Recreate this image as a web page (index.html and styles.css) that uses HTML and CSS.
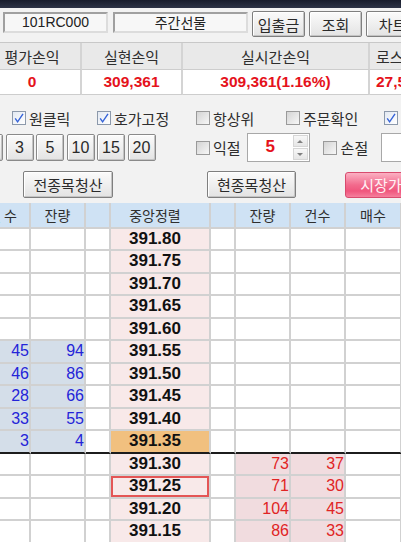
FILE: index.html
```html
<!DOCTYPE html>
<html lang="ko">
<head>
<meta charset="utf-8">
<title>주간선물 주문</title>
<link rel="stylesheet" href="styles.css">
</head>
<body>
<div class="app">
  <div class="titlebar"></div>

  <div class="toolbar">
    <div class="field code">101RC000</div>
    <div class="field name">주간선물</div>
    <button class="btn tb">입출금</button>
    <button class="btn tb">조회</button>
    <button class="btn tb">차트</button>
  </div>

  <div class="pnl">
    <div class="pc hd">평가손익</div>
    <div class="pc hd">실현손익</div>
    <div class="pc hd">실시간손익</div>
    <div class="pc hd left">로스컷</div>
    <div class="pc val">0</div>
    <div class="pc val">309,361</div>
    <div class="pc val">309,361(1.16%)</div>
    <div class="pc val left">27,512</div>
  </div>

  <div class="opt-row r1">
    <label class="chk w1"><span class="box on"><svg viewBox="0 0 12 12" width="12" height="12"><path d="M2.2 6.4 L4.6 9.8 L10 1.8" fill="none" stroke="#3563d8" stroke-width="1.4"/></svg></span><span>원클릭</span></label>
    <label class="chk w2"><span class="box on"><svg viewBox="0 0 12 12" width="12" height="12"><path d="M2.2 6.4 L4.6 9.8 L10 1.8" fill="none" stroke="#3563d8" stroke-width="1.4"/></svg></span><span>호가고정</span></label>
    <label class="chk w3"><span class="box"></span><span>항상위</span></label>
    <label class="chk w4"><span class="box"></span><span>주문확인</span></label>
    <label class="chk"><span class="box on"><svg viewBox="0 0 12 12" width="12" height="12"><path d="M2.2 6.4 L4.6 9.8 L10 1.8" fill="none" stroke="#3563d8" stroke-width="1.4"/></svg></span><span>자동</span></label>
  </div>

  <div class="opt-row r2">
    <button class="btn nb first">1</button>
    <button class="btn nb">3</button>
    <button class="btn nb">5</button>
    <button class="btn nb">10</button>
    <button class="btn nb">15</button>
    <button class="btn nb">20</button>
    <label class="chk ik"><span class="box"></span><span>익절</span></label>
    <div class="spin">
      <span class="spin-val">5</span>
      <span class="spin-btns"><span class="sb up"></span><span class="sb dn"></span></span>
    </div>
    <label class="chk sj"><span class="box"></span><span>손절</span></label>
    <div class="input-box"></div>
  </div>

  <div class="opt-row r3">
    <button class="btn big b-all">전종목청산</button>
    <button class="btn big b-cur">현종목청산</button>
    <button class="mkt">시장가</button>
  </div>

  <div class="book">
    <div class="bk h edge">건수</div><div class="bk h">잔량</div><div class="bk h"></div><div class="bk h pr">중앙정렬</div><div class="bk h"></div><div class="bk h">잔량</div><div class="bk h">건수</div><div class="bk h">매수</div>

    <div class="bk"></div><div class="bk"></div><div class="bk"></div><div class="bk p">391.80</div><div class="bk"></div><div class="bk"></div><div class="bk"></div><div class="bk"></div>
    <div class="bk"></div><div class="bk"></div><div class="bk"></div><div class="bk p">391.75</div><div class="bk"></div><div class="bk"></div><div class="bk"></div><div class="bk"></div>
    <div class="bk"></div><div class="bk"></div><div class="bk"></div><div class="bk p">391.70</div><div class="bk"></div><div class="bk"></div><div class="bk"></div><div class="bk"></div>
    <div class="bk"></div><div class="bk"></div><div class="bk"></div><div class="bk p">391.65</div><div class="bk"></div><div class="bk"></div><div class="bk"></div><div class="bk"></div>
    <div class="bk"></div><div class="bk"></div><div class="bk"></div><div class="bk p">391.60</div><div class="bk"></div><div class="bk"></div><div class="bk"></div><div class="bk"></div>

    <div class="bk s">45</div><div class="bk s">94</div><div class="bk"></div><div class="bk p">391.55</div><div class="bk"></div><div class="bk"></div><div class="bk"></div><div class="bk"></div>
    <div class="bk s">46</div><div class="bk s">86</div><div class="bk"></div><div class="bk p">391.50</div><div class="bk"></div><div class="bk"></div><div class="bk"></div><div class="bk"></div>
    <div class="bk s">28</div><div class="bk s">66</div><div class="bk"></div><div class="bk p">391.45</div><div class="bk"></div><div class="bk"></div><div class="bk"></div><div class="bk"></div>
    <div class="bk s">33</div><div class="bk s">55</div><div class="bk"></div><div class="bk p">391.40</div><div class="bk"></div><div class="bk"></div><div class="bk"></div><div class="bk"></div>
    <div class="bk s ln">3</div><div class="bk s ln">4</div><div class="bk ln"></div><div class="bk p cur ln">391.35</div><div class="bk ln"></div><div class="bk ln"></div><div class="bk ln"></div><div class="bk ln"></div>

    <div class="bk"></div><div class="bk"></div><div class="bk"></div><div class="bk p">391.30</div><div class="bk"></div><div class="bk b">73</div><div class="bk b">37</div><div class="bk"></div>
    <div class="bk"></div><div class="bk"></div><div class="bk"></div><div class="bk p sel">391.25</div><div class="bk"></div><div class="bk b">71</div><div class="bk b">30</div><div class="bk"></div>
    <div class="bk"></div><div class="bk"></div><div class="bk"></div><div class="bk p">391.20</div><div class="bk"></div><div class="bk b">104</div><div class="bk b">45</div><div class="bk"></div>
    <div class="bk"></div><div class="bk"></div><div class="bk"></div><div class="bk p">391.15</div><div class="bk"></div><div class="bk b">86</div><div class="bk b">33</div><div class="bk"></div>
  </div>
</div>
</body>
</html>
```

FILE: styles.css
```css
* { box-sizing: border-box; }

html, body {
  margin: 0;
  padding: 0;
}

body {
  width: 401px;
  height: 542px;
  overflow: hidden;
  background: #f2f2f2;
  font-family: "Noto Sans CJK KR", "DejaVu Sans", sans-serif;
  font-size: 15px;
  color: #2e2e2e;
}

.app {
  width: 401px;
  height: 542px;
  overflow: hidden;
  background: #f2f2f2;
}

.titlebar {
  height: 8px;
  background: linear-gradient(#181c2c, #2d3346);
}

/* ---------- toolbar ---------- */
.toolbar {
  display: flex;
  height: 34px;
  padding-top: 3px;
  padding-left: 3px;
}

.field {
  flex: none;
  height: 21px;
  margin-top: 1px;
  border: 2px solid;
  border-color: #a0a0a0 #dcdcdc #dcdcdc #a0a0a0;
  background: #f7f7f7;
  font-size: 14px;
  line-height: 17px;
  text-align: center;
  color: #222;
}

.field.code {
  width: 105px;
  font-family: "Liberation Sans", sans-serif;
}

.field.name {
  width: 135px;
  margin-left: 5px;
}

.btn {
  flex: none;
  padding: 0;
  font-family: "Noto Sans CJK KR", "DejaVu Sans", sans-serif;
  font-size: 15px;
  line-height: 1;
  color: #2a2a2a;
  background: linear-gradient(#fbfbfb, #e3e3e3);
  border: 1px solid #7f7f7f;
  border-radius: 2px;
  box-shadow: inset 1px 1px 0 #ffffff, inset -1px -1px 0 #c4c4c4;
  display: flex;
  align-items: center;
  justify-content: center;
}

.btn.tb {
  width: 53px;
  height: 26px;
  margin-left: 4px;
}

/* ---------- P&L strip ---------- */
.pnl {
  display: grid;
  grid-template-columns: 98px 101px 187px 100px;
  grid-template-rows: 27px 25px;
  width: 486px;
  margin-left: -16px;
  border-top: 1px solid #c8c8c8;
}

.pc {
  display: flex;
  align-items: center;
  justify-content: center;
  border-right: 2px solid #d4d4d4;
  border-bottom: 1px solid #cdcdcd;
  white-space: nowrap;
}

.pc.hd {
  background: #e9e9e9;
  font-size: 15px;
  color: #2e2e2e;
}

.pc.val {
  background: #ffffff;
  color: #e5121b;
  font-family: "Liberation Sans", sans-serif;
  font-weight: bold;
  font-size: 15.5px;
}

.pc.left {
  justify-content: flex-start;
  padding-left: 6px;
}

/* ---------- option rows ---------- */
.opt-row {
  display: flex;
  align-items: center;
  white-space: nowrap;
}

.r1 {
  height: 24px;
  margin-top: 11px;
  padding-left: 12px;
}

.r2 {
  height: 29px;
  margin-top: 3px;
}

.r3 {
  height: 27px;
  margin-top: 9px;
}

.chk {
  flex: none;
  display: flex;
  align-items: center;
  gap: 3px;
  font-size: 15px;
  color: #2e2e2e;
}

.chk.w1 { width: 85px; }
.chk.w2 { width: 99px; }
.chk.w3 { width: 90px; }
.chk.w4 { width: 98px; }

.box {
  flex: none;
  width: 14px;
  height: 14px;
  border: 1px solid #9a9a9a;
  background: linear-gradient(135deg, #d4d4d4, #f7f7f7);
  display: flex;
  align-items: center;
  justify-content: center;
}

.box.on {
  border-color: #8c99ab;
  background: linear-gradient(135deg, #e3e9f2, #ffffff);
}

.nb {
  width: 28px;
  height: 27px;
  margin-left: 2.5px;
  font-family: "Liberation Sans Narrow", "Liberation Sans", sans-serif;
  font-size: 16px;
  border-color: #8a8a8a;
}

.nb.first {
  margin-left: -25px;
}

.chk.ik {
  margin-left: 40.5px;
}

.spin {
  flex: none;
  display: flex;
  width: 63px;
  height: 29px;
  margin-left: 6px;
  border: 1px solid #a8a8a8;
  background: #ffffff;
}

.spin-val {
  flex: 1;
  text-align: center;
  color: #e5121b;
  font-family: "Liberation Sans", sans-serif;
  font-weight: bold;
  font-size: 17px;
  line-height: 26px;
}

.spin-btns {
  width: 16px;
  display: flex;
  flex-direction: column;
  gap: 1px;
  padding: 1px 1px 1px 0;
}

.sb {
  flex: 1;
  display: flex;
  align-items: center;
  justify-content: center;
  background: linear-gradient(#f8f8f8, #e6e6e6);
  border: 1px solid #d6d6d6;
}

.sb::after {
  content: "";
  border-left: 3px solid transparent;
  border-right: 3px solid transparent;
}

.sb.up::after { border-bottom: 3px solid #808080; }
.sb.dn::after { border-top: 3px solid #808080; }

.chk.sj {
  margin-left: 13px;
  gap: 4px;
}

.input-box {
  flex: none;
  width: 60px;
  height: 29px;
  margin-left: 13px;
  border: 1px solid #a8a8a8;
  background: #ffffff;
}

.big {
  height: 27px;
}

.b-all {
  width: 90px;
  margin-left: 23px;
}

.b-cur {
  width: 89px;
  margin-left: 94px;
}

.mkt {
  flex: none;
  width: 72px;
  height: 26px;
  margin-left: 49px;
  padding: 0;
  border: 1px solid #d84b6e;
  border-radius: 3px;
  background: linear-gradient(#fbb0c2, #f26a8c 50%, #f0567d 75%, #f57f9d);
  color: #fff2f5;
  font-family: "Noto Sans CJK KR", "DejaVu Sans", sans-serif;
  font-size: 15px;
  line-height: 1;
}

/* ---------- order book ---------- */
.book {
  display: grid;
  grid-template-columns: 55px 55px 25px 100px 25px 55px 55px 56px;
  grid-template-rows: 25.5px;
  grid-auto-rows: 22.5px;
  width: 426px;
  margin-top: 5px;
  margin-left: -24px;
}

.bk {
  display: flex;
  align-items: center;
  justify-content: flex-end;
  border-right: 2px solid #d1d1d1;
  border-bottom: 2px solid #d1d1d1;
  background: #ffffff;
  font-family: "Liberation Sans Narrow", "Liberation Sans", sans-serif;
  font-size: 16px;
  white-space: nowrap;
}

.bk.h {
  justify-content: center;
  background: #cfe2f4;
  font-family: "Noto Sans CJK KR", "DejaVu Sans", sans-serif;
  font-size: 14px;
  color: #2e2e2e;
}

.bk.h.edge {
  justify-content: flex-end;
  padding-right: 9px;
  letter-spacing: 3px;
}

.bk.h.pr {
  padding-right: 10px;
}

.bk.p {
  justify-content: center;
  padding-right: 10px;
  background: #f8e9e9;
  font-family: "Liberation Sans", sans-serif;
  font-weight: bold;
  font-size: 17px;
  color: #111;
}

.bk.cur {
  background: #f1c07f;
}

.bk.sel {
  box-shadow: inset 0 0 0 2px #e45555;
}

.bk.s {
  background: #d4dee9;
  color: #2424d8;
}

.bk.b {
  background: #f1dcdf;
  color: #e02424;
}

.bk.ln {
  border-bottom-color: #1c1c1c;
}
```
